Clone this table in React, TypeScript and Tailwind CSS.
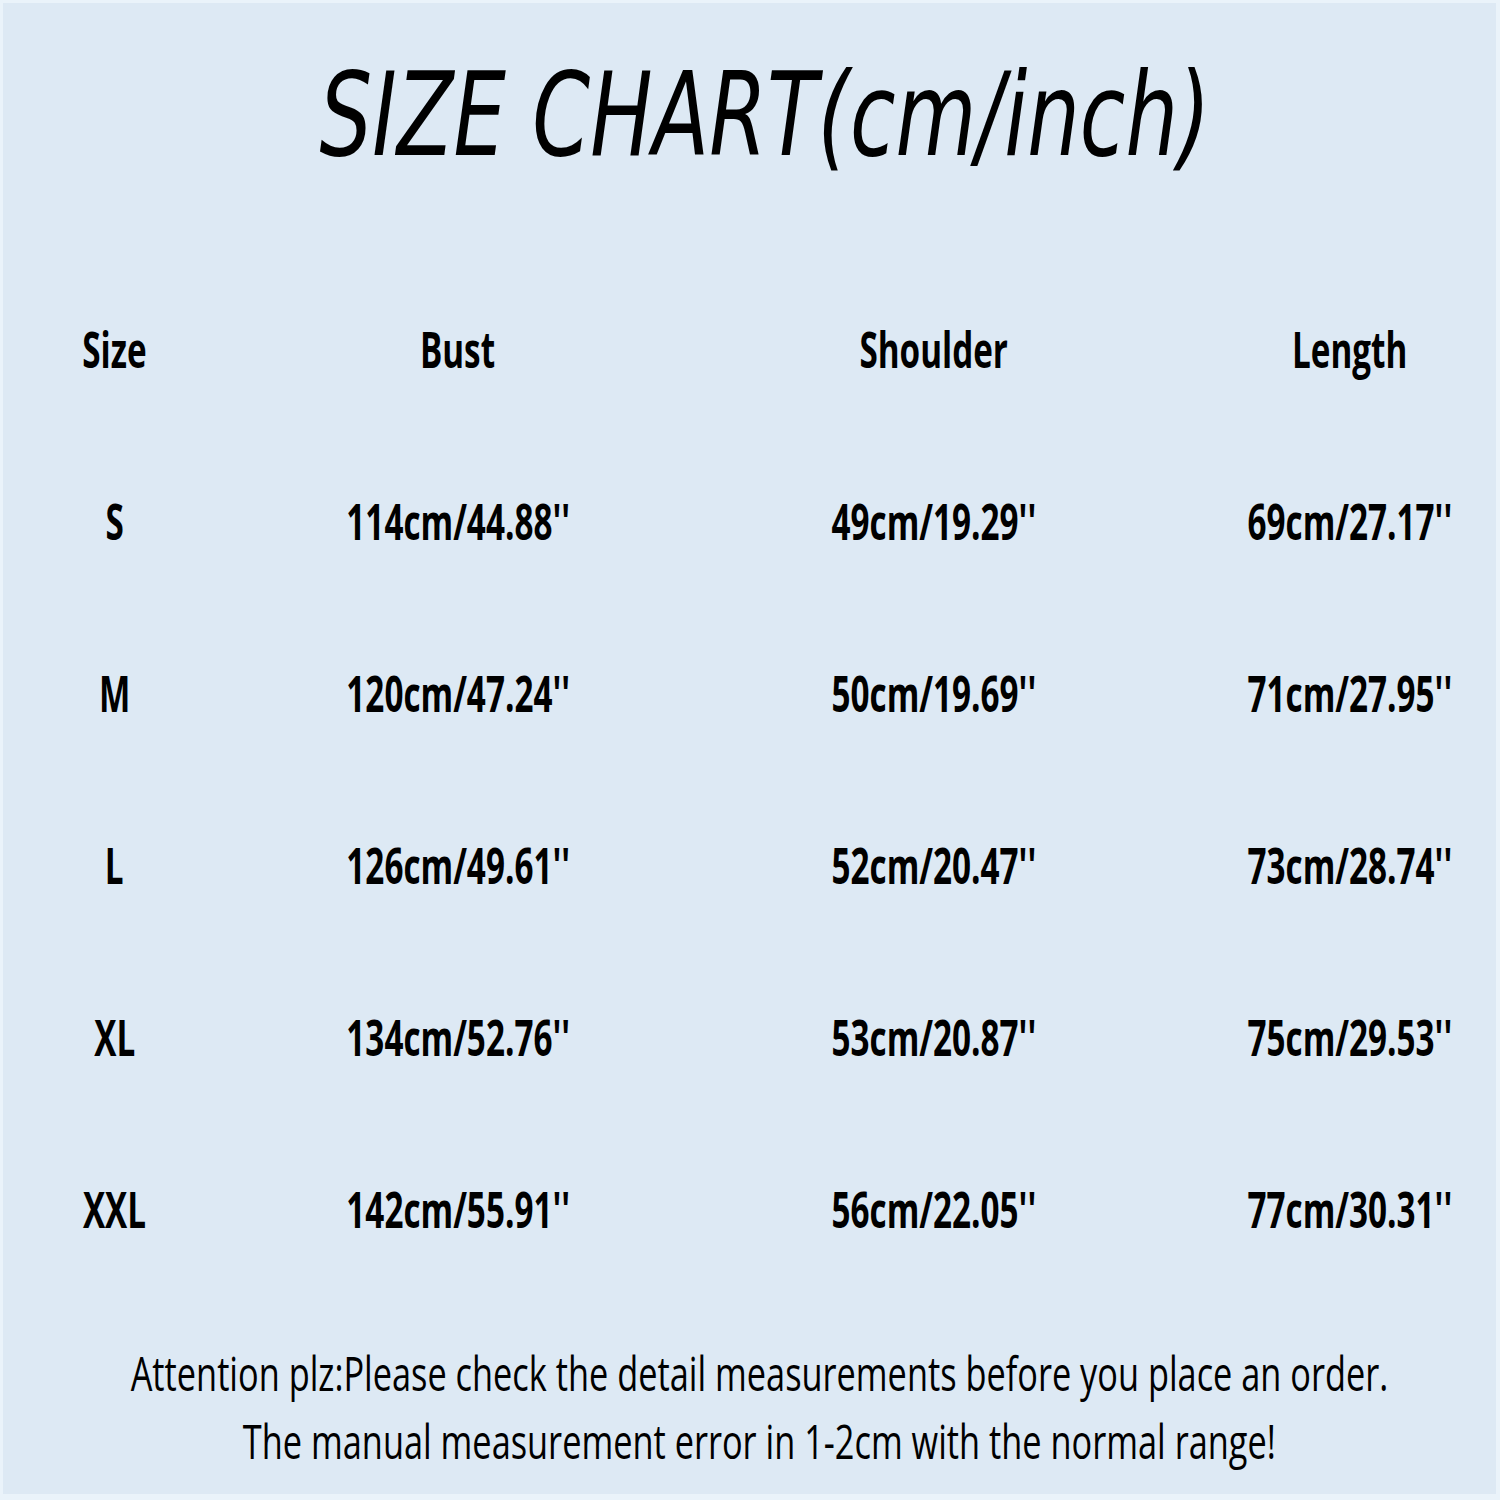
const headers = ["Size", "Bust", "Shoulder", "Length"];

const rows = [
  ["S", "114cm/44.88''", "49cm/19.29''", "69cm/27.17''"],
  ["M", "120cm/47.24''", "50cm/19.69''", "71cm/27.95''"],
  ["L", "126cm/49.61''", "52cm/20.47''", "73cm/28.74''"],
  ["XL", "134cm/52.76''", "53cm/20.87''", "75cm/29.53''"],
  ["XXL", "142cm/55.91''", "56cm/22.05''", "77cm/30.31''"],
];

function Cell({ text }: { text: string }) {
  return (
    <div className="flex items-center justify-center h-[172px]">
      <span className="inline-block whitespace-nowrap scale-x-[0.665] font-bold text-[50px] leading-none text-black">
        {text}
      </span>
    </div>
  );
}

export default function App() {
  return (
    <div
      className="w-[1500px] h-[1500px] overflow-hidden bg-[#dde9f4] border-t-[3px] border-l-[3px] border-r-[4px] border-b-[6px] border-[#eaf3fa] flex flex-col"
      style={{ fontFamily: '"Open Sans", "Liberation Sans", sans-serif' }}
    >
      {/* Title */}
      <div className="h-[260px] flex justify-center pl-[30px] pt-[54px]">
        <h1
          className="whitespace-nowrap italic font-normal text-[116px] leading-none text-black scale-x-[0.715] inline-block"
          style={{ fontFamily: '"DejaVu Sans", sans-serif' }}
        >
          SIZE CHART(cm/inch)
        </h1>
      </div>

      {/* Table */}
      <div className="grid grid-cols-[229px_458px_494px_338px] -ml-[3px]">
        {headers.map((h) => (
          <Cell key={h} text={h} />
        ))}
        {rows.map((r) => r.map((c, i) => <Cell key={r[0] + i} text={c} />))}
      </div>

      {/* Footer note */}
      <div className="flex flex-col items-center mt-[44px] pl-[20px]">
        <p className="h-[68px] flex items-center whitespace-nowrap">
          <span className="inline-block scale-x-[0.715] text-[48px] leading-none text-black">
            Attention plz:Please check the detail measurements before you place an order.
          </span>
        </p>
        <p className="h-[68px] flex items-center whitespace-nowrap">
          <span className="inline-block scale-x-[0.715] text-[48px] leading-none text-black">
            The manual measurement error in 1-2cm with the normal range!
          </span>
        </p>
      </div>
    </div>
  );
}
